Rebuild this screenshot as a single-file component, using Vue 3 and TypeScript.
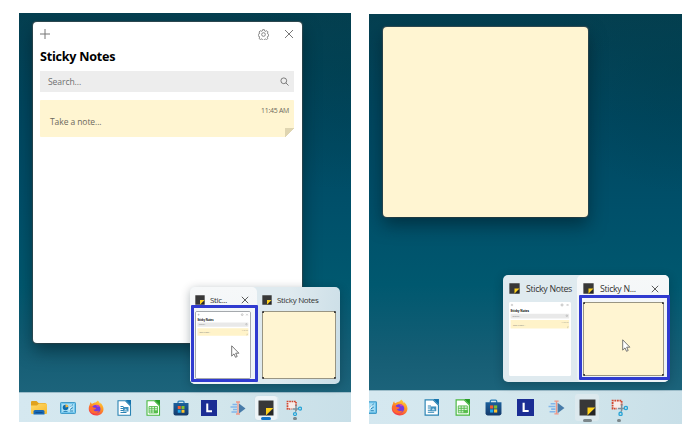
<script setup lang="ts">
interface TaskItem {
  icon: string
  state?: 'active' | 'running'
}
interface Preview {
  label: string
  kind: 'list' | 'note'
  hovered: boolean
}
interface Desktop {
  name: string
  previews: Preview[]
  tasks: TaskItem[]
}

const apps: TaskItem[] = [
  { icon: 'panel' },
  { icon: 'firefox' },
  { icon: 'writer' },
  { icon: 'calc' },
  { icon: 'store' },
  { icon: 'letter' },
  { icon: 'cast' },
  { icon: 'notes', state: 'active' },
  { icon: 'snip', state: 'running' },
]

const desktops: Desktop[] = [
  {
    name: 'first',
    previews: [
      { label: 'Stic...', kind: 'list', hovered: true },
      { label: 'Sticky Notes', kind: 'note', hovered: false },
    ],
    tasks: [{ icon: 'folder' }, ...apps],
  },
  {
    name: 'second',
    previews: [
      { label: 'Sticky Notes', kind: 'list', hovered: false },
      { label: 'Sticky N...', kind: 'note', hovered: true },
    ],
    tasks: apps,
  },
]
</script>

<template>
  <svg class="sprite" aria-hidden="true">
    <defs>
      <linearGradient id="g-folder" x1="0" y1="0" x2="1" y2="1">
        <stop offset="0" stop-color="#ffda6b" /><stop offset="1" stop-color="#f7b92c" />
      </linearGradient>
      <linearGradient id="g-fox" x1=".8" y1="0" x2=".3" y2="1">
        <stop offset="0" stop-color="#ffd43a" /><stop offset=".45" stop-color="#ff9426" /><stop offset="1" stop-color="#f3324d" />
      </linearGradient>
      <linearGradient id="g-store" x1="0" y1="0" x2="0" y2="1">
        <stop offset="0" stop-color="#1c609c" /><stop offset="1" stop-color="#143a6b" />
      </linearGradient>
    </defs>
    <symbol id="folder" viewBox="0 0 32 32">
      <path d="M0 4q0-2 2-2h9l4 4h13q2 0 2 2v18H0z" fill="#e0a21f" />
      <path d="M0 11h12l4-4h14q2 0 2 2v17q0 2-2 2H2q-2 0-2-2z" fill="url(#g-folder)" />
      <path d="M5 29v-6q0-3 3-3h16q3 0 3 3v6z" fill="#1869b5" />
      <path d="M9 25h14" stroke="#0d4f91" stroke-width="2" />
    </symbol>
    <symbol id="panel" viewBox="0 0 32 32">
      <rect x="1" y="5" width="30" height="22" rx="1.5" fill="#74c7ee" stroke="#419cc9" stroke-width="2" />
      <rect x="4" y="8" width="24" height="16" fill="#a7def5" />
      <circle cx="11" cy="15" r="5.500" fill="#0d6cad" />
      <path d="M11 15V8.500a6.500 6.500 0 0 1 6 5z" fill="#f5b23d" />
      <path d="M20 14l6-5M20 19l6-4M7 23h8M20 22h6" stroke="#2580b4" stroke-width="1.800" />
      <path d="M18 20l5-9" stroke="#fff" stroke-width="1.500" />
    </symbol>
    <symbol id="firefox" viewBox="0 0 32 32">
      <path d="M4 8c0-2 1-3 2-4 0 2 1 3 2 4 2-2 5-3 7-3 2-1 4-3 4-4 3 2 5 5 5 7 1-1 1-2 0-3 4 3 7 8 7 13 0 8-6 13-14.500 13S1.500 25 1.500 18c0-4 1-7 2.500-10z" fill="url(#g-fox)" />
      <path d="M8 14c2-3 5-4 8-4 6 0 9 4 9 8 0 5-4 8-8.500 8C11 26 7 22 8 14z" fill="#743be0" />
      <path d="M3 13c4-1 6 0 8 2l5 1c0 2-2 3-5 3 1 4 7 5 11 2-2 6-11 8-16 3-3-3-4-7-3-11z" fill="#ff6b30" />
      <path d="M15 10c4-1 7 1 9 4-2-1-4-1-5 0z" fill="#cf3ec0" />
    </symbol>
    <symbol id="writer" viewBox="0 0 32 32">
      <path d="M4 1.500h15l10 10v19H4z" fill="#fff" stroke="#2a83b3" stroke-width="2.200" />
      <path d="M19 0h11v11z" fill="#1473ad" />
      <path d="M9 13h6M9 17h5M9 21h6M9 25h12" stroke="#2a83b3" stroke-width="2" />
      <rect x="14" y="14" width="11" height="9" fill="#4192be" /><path d="M16 21l3-4 4 4z" fill="#b9dced" />
    </symbol>
    <symbol id="calc" viewBox="0 0 32 32">
      <path d="M4 1.500h15l10 10v19H4z" fill="#fff" stroke="#49b83f" stroke-width="2.200" />
      <path d="M19 0h11v11z" fill="#279c27" />
      <path d="M8 13h17v13H8zM8 17.500h17M8 22h17M13.500 13v13M19 13v13" fill="#e0f5dc" stroke="#54ba4c" stroke-width="1.700" />
      <path d="M18 21h8v5h-8z" fill="#55bd49" />
    </symbol>
    <symbol id="store" viewBox="0 0 32 32">
      <path d="M10 8V4q0-2 2-2h8q2 0 2 2v4" fill="none" stroke="#2b7eb8" stroke-width="2.500" />
      <path d="M1 6h30v21q0 4-4 4H5q-4 0-4-4z" fill="url(#g-store)" />
      <path d="M9.500 12h6v6h-6z" fill="#f45c31" /><path d="M17 12h6v6h-6z" fill="#83bf2d" />
      <path d="M9.500 19.500h6v6h-6z" fill="#20a9ed" /><path d="M17 19.500h6v6h-6z" fill="#ffc42d" />
    </symbol>
    <symbol id="letter" viewBox="0 0 32 32">
      <path d="M0 0h32v32H0z" fill="#1b2d94" />
      <path d="M12.500 7v15.500H22" fill="none" stroke="#fff" stroke-width="4" />
    </symbol>
    <symbol id="cast" viewBox="0 0 32 32">
      <path d="M5 9h9M1 14h13M6 19h8M3 24h11" stroke="#82b6ea" stroke-width="3" />
      <path d="M18 7l13 10-13 10z" fill="#477ba9" />
      <path d="M12 4h8M16 4v24M12 28h8" fill="none" stroke="#ee9888" stroke-width="2.600" />
    </symbol>
    <symbol id="notes" viewBox="0 0 32 32">
      <path d="M1 1h30v15L17 31H1z" fill="#383838" />
      <path d="M16 16h15L16 31z" fill="#ffd21c" /><path d="M31 16v15H16z" fill="#252525" />
    </symbol>
    <symbol id="snip" viewBox="0 0 32 32">
      <path d="M3 3h17v15H3z" fill="#f7ece9" />
      <path d="M20 12V3H3v15h8" fill="none" stroke="#d1472f" stroke-width="3.400" stroke-dasharray="3.400 1.400" />
      <path d="M20 10v12M13 18h12" stroke="#7d8e98" stroke-width="2.800" />
      <path d="M20 20l-1 5" stroke="#7d8e98" stroke-width="2" />
      <circle cx="28" cy="17" r="3" fill="none" stroke="#27a4d7" stroke-width="2.500" />
      <circle cx="18" cy="28" r="3" fill="none" stroke="#27a4d7" stroke-width="2.500" />
    </symbol>
    <symbol id="close" viewBox="0 0 10 10">
      <path d="M1 1l8 8M9 1L1 9" fill="none" stroke="currentColor" />
    </symbol>
    <symbol id="gear" viewBox="0 0 24 24">
      <path d="M10 1.500h4l.8 3 1.700.7 2.700-1.500 2.600 2.600-1.300 2.900.7 1.600 2.300 1v3.500l-2.500.8-.8 1.800 1.400 2.600-2.800 2.700-2.600-1.400-1.800.8-.8 2.200h-3.500l-.8-2.400-1.800-.8-2.500 1.400-2.800-2.700 1.500-2.600-.8-1.700-2.700-.9v-3.500l2.700-.9.7-1.600-1.300-2.600 2.600-2.700 2.600 1.300 1.700-.7z" fill="none" stroke="currentColor" stroke-width="1.900" />
      <circle cx="12" cy="12" r="4" fill="none" stroke="currentColor" stroke-width="1.900" />
    </symbol>
    <symbol id="search" viewBox="0 0 10 10">
      <circle cx="4.200" cy="4.200" r="3.200" fill="none" stroke="currentColor" /><path d="M6.500 6.500L9.500 9.500" stroke="currentColor" />
    </symbol>
  </svg>

  <main class="page">
    <section v-for="desk in desktops" :key="desk.name" class="desktop" :class="desk.name">
      <article v-if="desk.name === 'first'" class="window list-window">
        <header class="toolbar">
          <svg class="plus" viewBox="0 0 10 10"><path d="M5 0v10M0 5h10" stroke="currentColor" /></svg>
          <svg class="gear"><use href="#gear" /></svg>
          <svg class="close"><use href="#close" /></svg>
        </header>
        <h1>Sticky Notes</h1>
        <div class="search"><span>Search...</span><svg><use href="#search" /></svg></div>
        <div class="card">
          <time>11:45 AM</time>
          <p>Take a note...</p>
          <i class="fold"></i>
        </div>
      </article>
      <article v-else class="window note-window"></article>

      <div class="flyout">
        <div v-for="p in desk.previews" :key="p.kind" class="preview" :class="[p.kind, { hovered: p.hovered }]">
          <div class="caption">
            <svg class="app"><use href="#notes" /></svg>
            <span>{{ p.label }}</span>
            <svg v-if="p.hovered" class="dismiss"><use href="#close" /></svg>
          </div>
          <div class="thumb">
            <svg v-if="p.kind === 'list'" viewBox="0 0 270 323" preserveAspectRatio="none">
              <path d="M0 0h270v323H0z" fill="#fff" />
              <path d="M8 13h10M13 8v10M251 9l8 8M259 9l-8 8" stroke="#999" stroke-width="2" />
              <circle cx="231" cy="13" r="4.500" fill="none" stroke="#aaa" stroke-width="3" />
              <text x="7" y="42" class="mini mini-title">Sticky Notes</text>
              <path d="M7 51h255v21H7z" fill="#e9e9e9" />
              <text x="15" y="65" class="mini">Search...</text>
              <circle cx="252" cy="60" r="3.500" fill="none" stroke="#999" stroke-width="2" />
              <path d="M7 79h255v37H7z" fill="#fff3c9" />
              <text x="17" y="104" class="mini">Take a note...</text>
              <text x="229" y="92" class="mini mini-time">11:45 AM</text>
              <path d="M253 107h9l-9 9z" fill="#d8cfae" />
            </svg>
          </div>
          <i v-if="p.hovered" class="frame"></i>
        </div>
        <svg class="cursor" viewBox="0 0 9 13">
          <path d="M.7.8v10.300l2.300-2.200 1.500 3.400 1.700-.8-1.500-3.300h3.200z" fill="#fff" stroke="#555" stroke-width=".8" />
        </svg>
      </div>

      <nav class="taskbar">
        <div v-for="t in desk.tasks" :key="t.icon" class="task" :class="[t.state, t.icon]">
          <svg><use :href="'#' + t.icon" /></svg>
        </div>
      </nav>
    </section>
  </main>
</template>

<style>
body {
  background: #fff;
  overflow: hidden;
}
</style>

<style scoped>
.sprite {
  position: absolute;
  width: 0;
  height: 0;
}
svg {
  display: block;
  flex: none;
}
.page {
  box-sizing: border-box;
  width: 700px;
  height: 443px;
  padding: 13px 18px 0 19px;
  display: flex;
  gap: 18px;
  font-family: 'Open Sans', 'Noto Sans', sans-serif;
}
.desktop {
  position: relative;
  overflow: hidden;
  display: flex;
  flex-direction: column;
  justify-content: flex-end;
  background:
    radial-gradient(ellipse 130px 130px at 100% 12%, rgba(0, 62, 76, 0.5), transparent),
    linear-gradient(180deg, #053f50 0%, #004760 25%, #00506a 48%, #00586f 66%, #165e75 84%, #216880 100%);
}
.first {
  width: 332px;
  height: 409px;
}
.second {
  width: 313px;
  height: 410px;
  margin-top: 1px;
}
.window {
  position: absolute;
  box-sizing: border-box;
  box-shadow: 0 8px 17px rgba(0, 20, 28, 0.5), 0 0 1px 0.5px rgba(75, 85, 85, 0.7);
}
.list-window {
  left: 14px;
  top: 9px;
  width: 269px;
  height: 321px;
  border-radius: 4px;
  background: #fff;
  padding: 7px 8px 0 7px;
}
.note-window {
  left: 14px;
  top: 13px;
  width: 205px;
  height: 190px;
  border-radius: 4px;
  background: #fff5d2;
}
.toolbar {
  display: flex;
  align-items: center;
  height: 10px;
  color: #777;
}
.plus {
  width: 10px;
  height: 10px;
}
.gear {
  width: 11px;
  height: 11px;
  margin-left: auto;
}
.close {
  width: 10px;
  height: 10px;
  margin-left: 15px;
}
h1 {
  margin: 9px 0 5px;
  font-size: 12.6px;
  line-height: 18px;
  font-weight: 700;
  letter-spacing: -0.25px;
  color: #000;
  white-space: nowrap;
}
.search {
  height: 21px;
  padding: 0 5px 0 8px;
  display: flex;
  align-items: center;
  justify-content: space-between;
  background: #ededed;
  color: #707070;
  font-size: 8.6px;
  letter-spacing: -0.1px;
}
.search svg {
  width: 9px;
  height: 9px;
}
.card {
  position: relative;
  height: 37px;
  margin-top: 8px;
  box-sizing: border-box;
  padding: 5px 5px 0 10px;
  background: #fff5d1;
  border-radius: 1px;
  color: #6d695d;
}
time {
  display: block;
  text-align: right;
  font-size: 6.9px;
  line-height: 11px;
  letter-spacing: -0.25px;
}
.card p {
  margin: 0;
  font-size: 8.5px;
  line-height: 12px;
  letter-spacing: -0.08px;
}
.fold {
  position: absolute;
  right: 0;
  bottom: 0;
  width: 9px;
  height: 9px;
  background: linear-gradient(135deg, #dfd5b1 50%, #fff 51%);
}
.flyout {
  position: absolute;
  display: flex;
  border-radius: 5px;
  background: linear-gradient(100deg, #dfeaef 60%, #c9dde6 100%);
  box-shadow: 0 2px 10px rgba(0, 25, 35, 0.3);
}
.first .flyout {
  left: 171px;
  top: 274px;
  width: 150px;
  height: 97px;
}
.second .flyout {
  left: 134px;
  top: 261px;
  width: 166px;
  height: 107px;
}
.preview {
  position: relative;
  box-sizing: border-box;
  padding: 7px 5px 0;
}
.first .list {
  width: 67px;
}
.first .note {
  width: 83px;
}
.second .preview {
  padding: 8px 6px 0;
}
.second .list {
  width: 74px;
}
.second .note {
  width: 92px;
}
.hovered {
  background: linear-gradient(#f6f8f9, #edf3f6);
  border-radius: 5px;
}
.caption {
  display: flex;
  align-items: center;
  height: 11px;
  color: #333;
  font-size: 8px;
  letter-spacing: -0.32px;
  white-space: nowrap;
}
.app {
  width: 10px;
  height: 10px;
  margin-right: 5px;
}
.second .app {
  width: 11px;
  height: 11px;
  margin-right: 6px;
}
.second .caption {
  font-size: 8.8px;
  letter-spacing: -0.33px;
}
.dismiss {
  width: 8px;
  height: 8px;
  margin-left: auto;
}
.first .dismiss {
  margin-right: 3px;
}
.second .dismiss {
  margin-right: 4px;
}
.thumb {
  box-sizing: border-box;
  margin-top: 6px;
  height: 68px;
  border-radius: 2px;
  overflow: hidden;
  background: #fff;
}
.first .list .thumb {
  width: 56px;
  border: 1px solid #a5a9ad;
}
.first .note .thumb {
  width: 74px;
}
.second .thumb {
  margin-top: 8px;
  height: 74px;
}
.second .note .thumb {
  width: 81px;
}
.thumb svg {
  width: 100%;
  height: 100%;
}
.note .thumb {
  background:
    linear-gradient(#444, #444) 0 0 / 2px 2px no-repeat,
    linear-gradient(#444, #444) 100% 0 / 2px 2px no-repeat,
    linear-gradient(#444, #444) 0 100% / 2px 2px no-repeat,
    linear-gradient(#444, #444) 100% 100% / 2px 2px no-repeat,
    #fff5d2;
  background-origin: border-box;
  border: 1px solid rgba(70, 70, 65, 0.55);
  border-radius: 1px;
}
.frame {
  position: absolute;
  box-sizing: border-box;
  border: 3px solid #303bd0;
  border-radius: 1px;
}
.first .frame {
  left: 1px;
  top: 18px;
  width: 67px;
  height: 77px;
}
.second .frame {
  left: 2px;
  top: 20px;
  width: 91px;
  height: 85px;
}
.cursor {
  position: absolute;
  width: 9px;
  height: 13px;
}
.first .cursor {
  left: 41px;
  top: 58px;
}
.second .cursor {
  left: 119px;
  top: 64px;
}
.taskbar {
  box-sizing: border-box;
  display: flex;
  align-items: center;
  border-top: 1px solid #9dbdca;
  background: linear-gradient(100deg, #d5e8f0 0%, #d2e6ec 60%, #c8dfe8 100%);
}
.first .taskbar {
  height: 30px;
  padding-left: 6px;
}
.second .taskbar {
  height: 34px;
}
.task {
  position: relative;
  flex: none;
  display: flex;
  justify-content: center;
  width: 28.35px;
}
.second .task {
  width: 31.3px;
}
.second .task.panel {
  margin-left: -16px;
}
.task svg {
  position: relative;
  width: 16px;
  height: 16px;
}
.second .task svg {
  width: 17px;
  height: 17px;
}
.active::before {
  content: '';
  position: absolute;
  width: 22px;
  height: 24px;
  top: -4px;
  left: 3px;
  border-radius: 3px;
  background: #edf4f7;
  box-shadow: 2px 0 0 -0.5px #dde9ee, 0 0 1px #b9cbd3;
}
.second .active::before {
  width: 24px;
  height: 27px;
  top: -5px;
  left: 3px;
  background: #dce9ee;
  box-shadow: none;
}
.active::after,
.running::after {
  content: '';
  position: absolute;
  top: 17.5px;
  left: 9px;
  width: 10px;
  height: 2.5px;
  border-radius: 2px;
  background: #1274ca;
}
.second .active::after {
  left: 11px;
  top: 20px;
  width: 9px;
  background: #7b868a;
}
.first .running::after {
  left: 12.5px;
  width: 4px;
  background: #7b868a;
}
.second .running::after {
  left: 14px;
  top: 20px;
  width: 4px;
  background: #7b868a;
}
.mini {
  font-family: 'Open Sans', sans-serif;
  font-size: 9px;
  fill: #777;
}
.mini-title {
  font-size: 13px;
  font-weight: 700;
  fill: #000;
}
.mini-time {
  font-size: 7px;
}
</style>
